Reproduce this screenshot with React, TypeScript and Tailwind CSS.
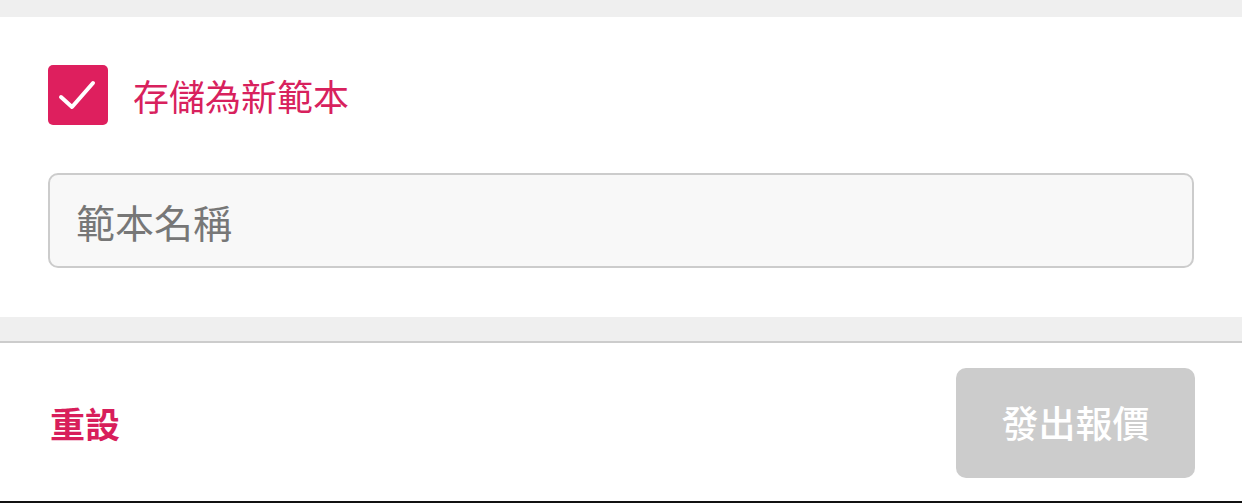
export default function App() {
  const font = { fontFamily: '"Noto Sans CJK TC", "Noto Sans", sans-serif' }

  return (
    <div className="flex h-[503px] w-full flex-col bg-white" style={font}>
      <div className="h-[17px] bg-[#efefef]" />

      <div className="flex flex-col px-[48px] pb-[49px] pt-[48px]">
        <label className="flex h-[60px] cursor-pointer items-center gap-[25px]">
          <span className="flex h-[60px] w-[60px] items-center justify-center rounded-[5px] bg-[#de1f5e]">
            <svg width="60" height="60" viewBox="0 0 60 60" fill="none">
              <path
                d="M13 32 L24 42 L45 18"
                stroke="white"
                strokeWidth="4"
                strokeLinecap="round"
                strokeLinejoin="round"
              />
            </svg>
          </span>
          <span className="text-[36px] leading-none text-[#d8215d]">存儲為新範本</span>
        </label>

        <input
          type="text"
          placeholder="範本名稱"
          className="mt-[48px] h-[95px] w-full rounded-[10px] border-2 border-[#cccccc] bg-[#f8f8f8] px-[26px] text-[39px] outline-none placeholder:text-[#777777]"
        />
      </div>

      <div className="h-[26px] border-b-2 border-[#cccccc] bg-[#efefef]" />

      <div className="flex flex-1 items-start justify-between border-b-2 border-[#111111] pl-[50px] pr-[47px] pt-[25px]">
        <span className="mt-[37px] text-[35px] font-bold leading-none text-[#d81e5b]">重設</span>
        <button
          disabled
          className="h-[110px] w-[239px] rounded-[10px] bg-[#cccccc] text-[37px] font-medium text-white"
        >
          發出報價
        </button>
      </div>
    </div>
  )
}
